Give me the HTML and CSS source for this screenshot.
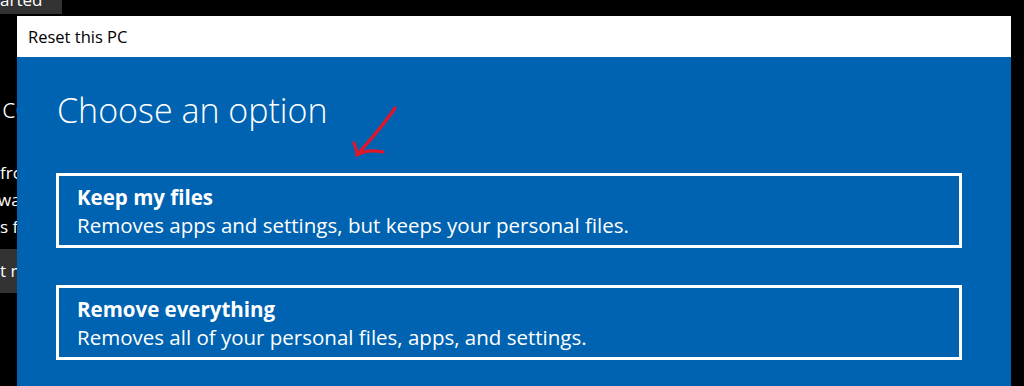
FILE: index.html
```html
<!DOCTYPE html>
<html>
<head>
<meta charset="utf-8">
<link rel="stylesheet" href="styles.css">
</head>
<body>
<div class="desktop">
  <div class="bgwin">
    <div class="topbtn"><span>arted</span></div>
    <div class="bghead">cover</div>
    <div class="bgpara">
      <div>from here</div>
      <div>way to</div>
      <div>s files</div>
    </div>
    <div class="bgbtn">t now</div>
  </div>

  <div class="dialog">
    <div class="titlebar">Reset this PC</div>
    <div class="content">
      <h1 class="heading">Choose an option</h1>
      <div class="option">
        <div class="opt-title">Keep my files</div>
        <div class="opt-desc">Removes apps and settings, but keeps your personal files.</div>
      </div>
      <div class="option">
        <div class="opt-title">Remove everything</div>
        <div class="opt-desc">Removes all of your personal files, apps, and settings.</div>
      </div>
    </div>
    <svg class="arrow" width="60" height="70" viewBox="0 0 60 70">
      <path d="M55 10 C47 22 33 39 17 57" fill="none" stroke="#e0162b" stroke-width="3.2" stroke-linecap="round"/>
      <path d="M14 45 C16 50 17 54 17 57 C23 53 33 52 43 54" fill="none" stroke="#e0162b" stroke-width="3.2" stroke-linecap="round" stroke-linejoin="round"/>
    </svg>
  </div>
</div>
</body>
</html>
```
FILE: styles.css
```css
html, body {
  margin: 0;
  padding: 0;
  background: #000;
  overflow: hidden;
}
.desktop {
  position: relative;
  width: 1024px;
  height: 386px;
  overflow: hidden;
  background: #000;
  font-family: "Open Sans", "Noto Sans", sans-serif;
}
.bgwin {
  position: absolute;
  left: 0;
  top: 0;
  width: 200px;
  color: #fff;
}
.topbtn {
  width: 62px;
  height: 14px;
  background: #333;
  overflow: hidden;
}
.topbtn span {
  display: block;
  font-size: 17px;
  line-height: 20px;
  margin-top: -10px;
  white-space: nowrap;
}
.bghead {
  margin-top: 75px;
  margin-left: 2px;
  font-size: 28px;
  font-weight: 300;
  line-height: 36px;
}
.bgpara {
  margin-top: 34px;
  font-size: 17px;
  line-height: 27px;
}
.bgpara div:nth-child(2) { margin-left: -2px; }
.bgbtn {
  margin-top: 9px;
  height: 44px;
  width: 120px;
  background: #333;
  font-size: 17px;
  line-height: 44px;
}
.dialog {
  position: absolute;
  left: 17px;
  top: 16px;
  width: 994px;
  height: 400px;
  background: #0063b1;
}
.titlebar {
  height: 41px;
  background: #fff;
  color: #000;
  font-size: 16.5px;
  line-height: 41px;
  padding-left: 11px;
  box-sizing: border-box;
}
.content {
  padding: 31px 0 0 39px;
  display: flex;
  flex-direction: column;
  gap: 37px;
}
.heading {
  margin: 0 0 4px 1px;
  font-size: 34px;
  font-weight: 300;
  line-height: 44px;
  color: #fff;
}
.option {
  width: 906px;
  height: 75px;
  box-sizing: border-box;
  border: 3px solid #fff;
  padding: 7px 18px 0;
  color: #fff;
}
.opt-title {
  font-size: 20.5px;
  font-weight: 700;
  line-height: 28px;
}
.opt-desc {
  font-size: 20.5px;
  line-height: 28px;
}
.arrow {
  position: absolute;
  left: 323px;
  top: 82px;
}
```
